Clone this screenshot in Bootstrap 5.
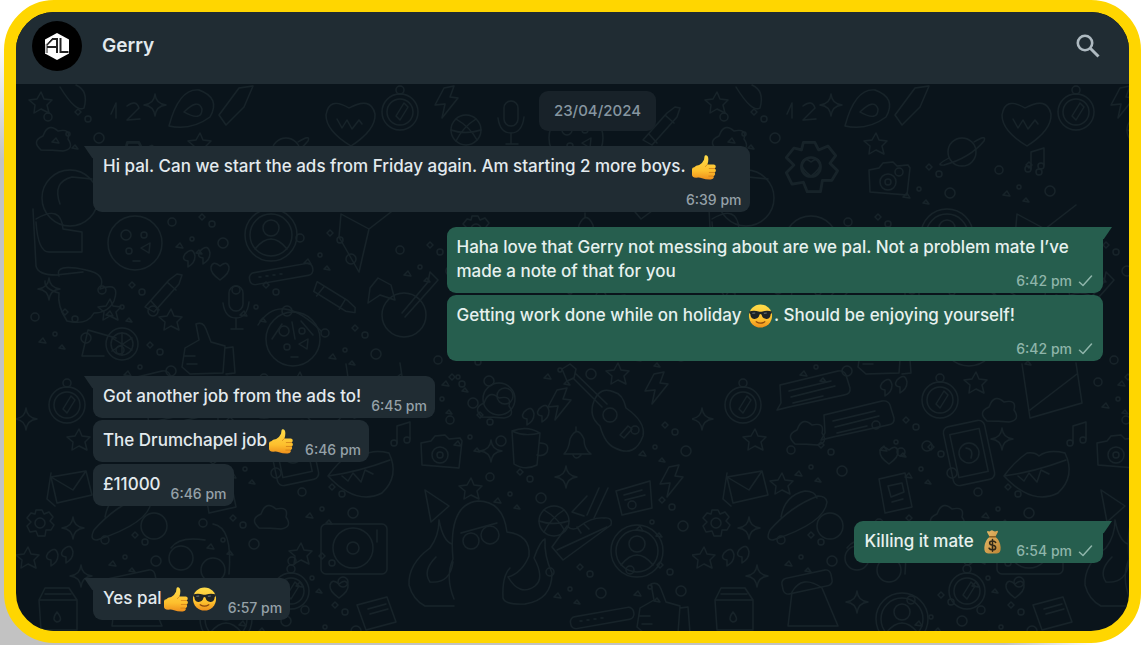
<!DOCTYPE html>
<html lang="en">
<head>
<meta charset="utf-8">
<meta name="viewport" content="width=device-width, initial-scale=1">
<title>Gerry</title>
<link href="https://cdn.jsdelivr.net/npm/bootstrap@5.3.0/dist/css/bootstrap.min.css" rel="stylesheet">
<style>
  body { font-family: Inter, "Liberation Sans", sans-serif; background: linear-gradient(to right, transparent 88%, #fff 96%), linear-gradient(#fff 40px, #c2c2c2 160px); }
  .page { padding: 0 0 2px 4px; }
  .phone { border: 12px solid #ffd600; border-radius: 50px; background: #0a141b; }
  .topbar { background: #202c33; height: 72px; padding: 0 28px 4px 16px; }
  .contact { font-size: 19px; line-height: 24px; font-weight: 600; color: #e2e9ed; }
  .tool { color: #aebac1; line-height: 0; }
  .doodles { stroke: #172329; stroke-width: 1.4; fill: none; stroke-linecap: round; stroke-linejoin: round; }
  .thread { padding: 7px 26px 10px 77px; }
  .group { margin-top: 15px; gap: 2px; }
  .day { background: #182229; color: #8696a0; border-radius: 9px; font-size: 15px; font-weight: 500; line-height: 24px; padding: 8px 15px; margin-right: 1px; }
  .bubble { position: relative; display: flex; align-items: end; gap: 10px; min-height: 42px; padding: 8px 8px 4px 10px; border-radius: 9px; background: #202c33; color: #e3eaee; font-size: 17px; font-weight: 500; line-height: 24px; }
  .bubble p { margin: 0 0 5px; align-self: start; }
  .bubble time { font-size: 14px; line-height: 16px; color: #95a1a8; white-space: nowrap; display: flex; align-items: center; gap: 6px; }
  .bubble.sent { background: #265e4e; color: #e6f1ee; padding-right: 10px; }
  .bubble.sent time { color: #8fb5aa; }
  .bubble.wide { display: grid; width: 65%; min-height: 66px; }
  .bubble.wide > * { grid-area: 1 / 1; }
  .bubble.wide time { align-self: end; justify-self: end; }
  .tail-l { border-top-left-radius: 0; }
  .tail-r { border-top-right-radius: 0; }
  .tail-l::before, .tail-r::after { content: ""; position: absolute; top: 0; width: 10px; height: 13px; background: inherit; }
  .tail-l::before { left: -9px; clip-path: polygon(0 0, 100% 0, 100% 100%, 80% 90%); }
  .tail-r::after { right: -9px; clip-path: polygon(0 0, 100% 0, 20% 90%, 0 100%); }
  .emo { width: 25px; height: 26px; vertical-align: middle; margin: -4px 1px -3px 2px; }
</style>
</head>
<body>
<svg width="0" height="0" class="position-absolute" aria-hidden="true">
  <defs>
    <linearGradient id="gold" x1="0" y1="0" x2="0" y2="1"><stop offset="0" stop-color="#ffdc4a"/><stop offset=".65" stop-color="#fdbf2d"/><stop offset="1" stop-color="#ee8f1c"/></linearGradient>
    <linearGradient id="sack" x1="0" y1="0" x2="1" y2="1"><stop offset="0" stop-color="#e9bd6c"/><stop offset="1" stop-color="#bd8434"/></linearGradient>
    <symbol id="thumb" viewBox="0 0 26 26">
      <path fill="url(#gold)" d="M2 13.5q2-2 5.500-2.500Q11 9 12.500 5.500L13 2q.3-1.500 1.800-1.200Q17 1.200 17 5q0 3-1 5.500h6.500q2.300.2 2.200 2 0 1.500-1.200 2 1.500.7 1.300 2.300-.2 1.500-1.500 1.900 1 .8.700 2.200-.4 1.400-1.700 1.600.6.900.1 2-.7 1.500-3 1.500-5 .2-9-1.200-2.500-1-4-.8-4 .5-5.500-.8-1.600-2-1.500-5 0-3 1.600-4.700z"/>
      <path fill="none" stroke="#cf7c17" stroke-width=".8" stroke-linecap="round" d="M18 14.600h5.500M18 18.700h5M17.500 22.500h4M16 10.500q-1.500 1-2 2"/>
    </symbol>
    <symbol id="cool" viewBox="0 0 26 26">
      <circle cx="13" cy="13" r="12" fill="url(#gold)"/>
      <path fill="#1f2426" d="M1 8.200q6-1.200 10 .2 2 .6 4 0 4-1.400 10-.2l-.5 2-.9.800q-.2 4.800-4 5-4.500.3-5.600-4.500-1-1.200-2 0Q10.900 16.300 6.400 16q-3.800-.2-4-5l-.9-.8z"/>
      <path stroke="#71797c" stroke-width="1" d="M4.500 10.200l3-.3M16.500 10.200l3-.3"/>
      <path fill="none" stroke="#8b480d" stroke-width="1.300" stroke-linecap="round" d="M8.500 19q4.500 3 9 0"/>
    </symbol>
    <symbol id="moneybag" viewBox="0 0 26 26">
      <path fill="url(#sack)" d="M8 1.500q2 1 3-.2 1.500-1 3 .2 1.500 1 4-.2 1 .2.500 1.500L16 7.500q5 4 5.500 11 .3 6.500-4 6.500h-9q-4.300 0-4-6.500Q5 11.500 10 7.500L7.500 3q-.5-1.300.5-1.500z"/>
      <path stroke="#7e541c" stroke-width="1.400" d="M9.500 7.600h7"/>
      <path fill="none" stroke="#302717" stroke-width="1.600" stroke-linecap="round" d="M16.300 13.500q-1-1.500-3.300-1.500-3 0-3 2.100 0 1.900 3 2.300 3.300.4 3.300 2.500 0 2.200-3.300 2.200-2.500 0-3.500-1.600M13 10.500v12"/>
    </symbol>
    <symbol id="tick" viewBox="0 0 15 12"><path fill="none" stroke="currentColor" stroke-width="1.500" stroke-linecap="round" stroke-linejoin="round" d="M1.500 7.200 5 10.500 13.500 1"/></symbol>

    <!-- wallpaper drawings, each centred on its own origin -->
    <g id="star5"><path d="M0-11 3-4l8 1-5 5 2 8-8-4-7 4 1-8-6-5 8-1z"/></g>
    <g id="star4"><path d="M0-11Q1-1 11 0 1 1 0 11-1 1-11 0-1-1 0-11z"/></g>
    <g id="heart"><path d="M0 9Q-10 2-9-4q2-7 9-1 7-6 9 1 1 6-9 13z"/></g>
    <g id="bigheart"><path d="M0 26q-25-15-25-31 3-19 23-7 22-12 26 6Q25 10 0 26zM-14-1l5 9 5-8 5 9 7-9 3 4"/></g>
    <g id="cam"><path d="M-19-12l10-2 4-5 10-1 4 4 11-1 2 3-3 27-37-3z"/><circle r="8"/><circle r="3"/></g>
    <g id="mail"><path d="M-20-12l35-6 6 24-35 8zM-20-12 2 1l13-19M-20-16l-4 26 8 7"/></g>
    <g id="chat"><path d="M-32-6l58-14q6-1 8 4l4 13q1 6-6 7l-55 12-12 3 4-7zM-23 0l42-10M-21 6l44-11M-19 12l30-7"/></g>
    <g id="person"><circle r="26"/><circle r="21"/><circle cy="-7" r="8"/><path d="M-16 14Q0-6 16 14"/></g>
    <g id="clock"><circle r="18"/><circle r="13"/><circle cy="-22" r="4"/><path d="M4-9-4 4l4 4L8-5z"/></g>
    <g id="pencil"><path d="M-18 14l24-27 8-6 5 1-3 9-25 28zM4-11l9 8M-12 8l8 9"/></g>
    <g id="cloud"><path d="M-14 10q-10-9 2-14 5-14 15-5 13-3 10 8 7 10-5 12-10-1-22-1z"/></g>
    <g id="mug"><path d="M-14-18q15-6 28 2l-3 32q-12 6-23-1zM-14-18q12 6 28 2M14-6q10 0 7 9-4 5-10 3"/></g>
    <g id="bell"><path d="M-13 9q5-5 6-15 7-15 14 0 0 10 7 15zM-4 10q3 6 8 0M-1-14v-4"/></g>
    <g id="guitar"><path d="M-48-46l8-5 6 5-2 9-7 3zM-37-37-8-8M-34-41-3-11M-16-14q6-15 20-9 9 2 12 16 20 14 17 28-8 22-28 12-10-4-15-22-12-10-6-25z"/><circle r="7"/><path d="M10 20l8-9 4 3-8 9z"/></g>
    <g id="planet"><circle r="14"/><path d="M-13 6Q-28 14-18 13 8 6 22-11 25-18 12-10"/></g>
    <g id="mic"><rect x="-7" y="-20" width="14" height="25" rx="7"/><path d="M-13-3q2 15 13 15T13-4M0 12v11M-5 23H7"/></g>
    <g id="bolt"><path d="M-2-14l10-2-4 11 8 1-16 20 3-14-10 1z"/></g>
    <g id="hand"><path d="M-18-1l14-8-3-16q7-3 10 5l5 13 14 4-2 27-33 1-8-7zM-18 7h10M-16 15H-6M22-1l8-1 2 26-9 1"/></g>
    <g id="tablet"><rect x="-21" y="-30" width="42" height="60" rx="6" transform="rotate(-12)"/><rect x="-15" y="-22" width="30" height="44" transform="rotate(-12)"/><circle r="10"/><path d="M-3-5q8 1 5 10"/></g>
    <g id="lips"><path d="M-34 6q10-14 23-23 8-1 12 3 9-7 26-3 11 23-7 40-26 13-54-17zM-34 6q30-4 62-16M-20 6l6 5 5-8 8 9 4-12 8 4"/></g>
    <g id="shoe"><path d="M-30 12-15-9q6 6 13 0 12-9 24-8 9-1 7 7L-19 25zM-25 15 25-8M-5-8l4 6M2-11l5 5"/></g>
    <g id="ball"><circle r="15"/><path d="M-10-11Q4-3 11 10M10-11Q-3-3-10 11M-15 0q14 5 30 0"/></g>
    <g id="gear"><path d="M-4-13h6l2 4 5-2 4 5-3 4 4 4-3 5-5 0-1 6-7 0-2-5-6 1-3-6 4-4-4-4 4-5 4 1z"/><circle r="5"/></g>
    <g id="note"><path d="M-5 9V-8L8-12V5"/><circle cx="-8" cy="9" r="3"/><circle cx="5" cy="6" r="3"/></g>
    <g id="quote"><path d="M-12-5q8-8 10 2 0 7-7 11l0-6q-7-1-3-7zM3-8q8-8 10 2 0 7-7 11l0-6q-7-1-3-7z"/></g>
    <g id="cookie"><circle r="27"/><circle cx="-9" cy="-8" r="5"/><circle cx="9" cy="-8" r="3"/><circle cx="-6" cy="8" r="3"/><path d="M6 5l9-5-1 10zM-2 18h7"/></g>
    <g id="octopus"><path d="M-25 55q-9-22-1-40-5-55 25-58 25 0 29 31 24 3 22 24-7 17-21 21 12 20 27 9 10-8-1-28 6-17 11-19-1 17 7 34 0 27-27 31-20 1-22-6-1-22 7-30M-27 0q-9-3-13-24 0 16-9 28-22 16-21 37 4 15 16 21l29 0M-43 13q-14 14-6 25 20 2 23-20"/><circle cx="-8" cy="-3" r="8"/><circle cx="11" cy="-9" r="9"/><path d="M-18-11l36-10"/></g>
    <g id="radio"><rect x="-32" y="-24" width="66" height="50" rx="5"/><circle r="20"/><circle r="6"/><path d="M24-18v12"/></g>
    <g id="carton"><path d="M-16 22l-2-30 6-12h24l8 12 0 30zM-18-8H20M-12-14H14"/><path d="M0 4q7 9 0 10-6-2 0-10z"/></g>
    <g id="ufo"><path d="M-35 12Q-14-12 13-22q8 0 9 6Q20 5-32 22q-8 0-3-10zM-24-1Q-20-23 0-27q10 0 12 7"/><circle cx="25" cy="8" r="13"/></g>
    <g id="tube"><rect x="-32" y="-5" width="64" height="12" rx="5" transform="rotate(-10)"/><path d="M-22 4h2m5-1h2m5-1h2m5-1h2"/></g>
    <g id="cheese"><path d="M-28 16l6-26 28 8M-28 16l22 0"/><circle cx="12" cy="4" r="16"/><circle cx="12" cy="4" r="11"/><path d="M2-2l20 12M12-7v22M2 11l20-13"/></g>
    <g id="dots"><circle cx="-26" cy="-9" r="4"/><circle cx="-6" cy="8" r="2"/><circle cx="14" cy="-7" r="3"/><circle cx="25" cy="12" r="5"/><path d="M-22 16l4-4 3 5zM4-17l3 3-3 3-3-3zM-2 22l3-3 3 4z"/></g>

    <pattern id="wall" class="doodles" width="676" height="560" patternUnits="userSpaceOnUse">
      <use href="#star5" x="25" y="19"/><path d="M44 3q16 26 24 21 5-17-8-23M95 30l5-11v15M111 22q9-7 12 2l-12 12 13-1"/><use href="#star4" x="139" y="21"/>
      <path d="M153 42q10-38 30-36 22 8 11 27-19 14-41 9zM168 28q14-14 18-3 0 13-18 3"/><path d="M203 31l20-27 14-2-9 21-18 18z"/><use href="#planet" x="270" y="68"/>
      <use href="#bigheart" x="335" y="36"/><use href="#clock" x="384" y="28"/><use href="#cam" x="196" y="98"/><use href="#cloud" x="39" y="56"/><use href="#star5" x="184" y="60"/>
      <g transform="translate(119 83)"><use href="#gear" transform="scale(1.900)"/><use href="#heart"/></g>
      <use href="#bolt" x="430" y="18"/><use href="#ball" x="450" y="46"/><use href="#star5" x="612" y="22"/><use href="#cookie" x="560" y="54"/><use href="#mic" x="495" y="37"/>
      <use href="#pencil" x="645" y="42"/><use href="#heart" x="520" y="87"/><use href="#note" x="344" y="76"/>
      <circle cx="54" cy="114" r="28"/><path d="M44 120q-8-22 12-27l20 2M17 125l3 57q2 9 20 9l27-3M20 135q25-15 27 10l19 3v20h-33q-11 0-13-30M43 192q-5-13 27-6 21 4 14 19 21-8 14 12-6 12-20 12-7 13-27 8-10-15-8-28-15-4-14-12"/>
      <use href="#cookie" x="119" y="159"/><use href="#person" x="255" y="151"/><use href="#tube" x="265" y="189"/><use href="#pencil" x="147" y="209"/><use href="#mic" x="220" y="222"/><use href="#heart" x="204" y="187"/><use href="#quote" x="181" y="175"/>
      <use href="#star4" x="33" y="205"/><use href="#star5" x="94" y="226"/><use href="#star5" x="155" y="236"/><use href="#cheese" x="94" y="256"/><use href="#hand" x="187" y="265"/><use href="#cookie" x="277" y="255"/><path d="M242 241q22-35 63 6M266 240l-10 15M276 238l3 17M285 237l12 14"/>
      <path d="M325 130l28 15-10 43-20-35zM353 145l31-24M362 194l13 7 4 15-15-5-12 8 2-15z"/><use href="#pencil" transform="translate(318 213) rotate(80)"/>
      <circle cx="388" cy="231" r="22"/><path d="M386 229l26-31 2-10 8 8-7 8-26 29"/><use href="#gear" x="460" y="145"/><use href="#planet" x="508" y="167"/><use href="#bell" x="570" y="147"/><use href="#note" x="619" y="182"/><use href="#cam" x="510" y="247"/><use href="#star4" x="641" y="157"/><use href="#mail" x="594" y="229"/><use href="#shoe" x="644" y="110"/>
      <use href="#clock" x="51" y="321"/><use href="#star4" x="10" y="335"/><use href="#star5" x="63" y="356"/><use href="#chat" x="120" y="307"/><use href="#chat" x="164" y="337"/><use href="#cloud" x="117" y="350"/><use href="#clock" x="248" y="316"/><use href="#quote" x="202" y="304"/><use href="#star5" x="284" y="299"/><use href="#cloud" x="309" y="327"/>
      <path d="M330 280l8 54 52-15-6-40M338 326l47-36"/><use href="#cloud" x="480" y="323"/><circle cx="483" cy="315" r="16"/><circle cx="489" cy="312" r="8"/><use href="#quote" x="520" y="333"/><use href="#bolt" x="543" y="320"/><use href="#guitar" x="594" y="331"/><use href="#star5" x="602" y="290"/><use href="#bolt" x="640" y="304"/>
      <use href="#cam" x="424" y="371"/><use href="#mug" x="510" y="365"/><use href="#bell" x="561" y="361"/><use href="#star4" x="475" y="367"/><use href="#star4" x="550" y="393"/><use href="#tablet" x="277" y="369"/><use href="#star4" x="310" y="355"/><use href="#lips" x="346" y="386"/><use href="#heart" x="197" y="371"/><use href="#note" x="386" y="350"/>
      <use href="#mail" x="55" y="405"/><use href="#gear" x="24" y="439"/><use href="#star4" x="57" y="444"/><use href="#ufo" x="113" y="434"/><use href="#star5" x="90" y="400"/><use href="#cloud" x="257" y="434"/><use href="#radio" x="337" y="464"/><path d="M187 395l26-6 7 34-27 6zM196 402l14-3 2 9-13 5zM200 418l11-3"/>
      <path d="M409 406l24 16-18 16z"/><use href="#star5" x="455" y="405"/><use href="#ball" x="538" y="437"/><use href="#octopus" x="463" y="460"/><path d="M571 412l-15 16 12 4M583 404l-12 27M592 404l-14 30"/><path d="M600 407l34-10 2 27-30 7zM608 411l18-5M609 416l20-5"/><use href="#bolt" x="655" y="397"/><use href="#shoe" x="566" y="451"/><use href="#person" x="621" y="467"/><use href="#tube" x="586" y="533"/>
      <use href="#star5" x="12" y="474"/><use href="#quote" x="44" y="474"/><use href="#star4" x="65" y="492"/><use href="#carton" x="41" y="524"/><circle cx="165" cy="474" r="12"/><circle cx="197" cy="486" r="12"/><path d="M155 464q8-12 34-8M197 440q20 3 16 50"/><rect x="90" y="490" width="50" height="16" rx="5" transform="rotate(-12 115 498)"/><path d="M100 508q10-18 30-4l16 38h-50z"/><use href="#star4" x="165" y="518"/><use href="#person" x="210" y="535"/><use href="#star5" x="285" y="470"/><use href="#heart" x="323" y="505"/><path d="M341 521l30-8 9 25-30 8zM352 525l18-5M354 530l18-5"/><use href="#clock" x="275" y="507"/><use href="#hand" x="642" y="525"/>
      <use href="#dots" x="58" y="42"/><use href="#dots" x="233" y="97"/><use href="#dots" x="333" y="95"/><use href="#dots" x="475" y="92"/><use href="#dots" x="595" y="85"/><use href="#dots" x="182" y="147"/><use href="#dots" x="310" y="163"/><use href="#dots" x="410" y="175"/><use href="#dots" x="560" y="200"/><use href="#dots" x="112" y="215"/><use href="#dots" x="246" y="215"/><use href="#dots" x="45" y="242"/><use href="#dots" x="130" y="275"/><use href="#dots" x="335" y="258"/><use href="#dots" x="448" y="285"/><use href="#dots" x="550" y="278"/><use href="#dots" x="640" y="260"/><use href="#dots" x="210" y="350"/><use href="#dots" x="432" y="307"/><use href="#dots" x="460" y="345"/><use href="#dots" x="645" y="355"/><use href="#dots" x="125" y="375"/><use href="#dots" x="235" y="377"/><use href="#dots" x="312" y="417"/><use href="#dots" x="500" y="402"/><use href="#dots" x="642" y="430"/><use href="#dots" x="213" y="448"/><use href="#dots" x="115" y="465"/><use href="#dots" x="302" y="486"/><use href="#dots" x="560" y="497"/><use href="#dots" x="640" y="495"/><use href="#dots" x="245" y="525"/><use href="#dots" x="315" y="535"/>
    </pattern>
  </defs>
</svg>

<div class="page min-vh-100 d-flex">
  <main class="phone flex-grow-1 d-flex flex-column overflow-hidden">
    <header class="topbar d-flex align-items-center">
      <svg width="50" height="50" viewBox="0 0 50 50" role="img" aria-label="AL logo">
        <circle cx="25" cy="25" r="25" fill="#000"/>
        <path fill="#fff" d="M25 12l12 6.500v14L25 39l-12-6.500v-14z"/>
        <path fill="none" stroke="#222" stroke-width="2" d="M14.500 32V24l6-6h4.500v14M15 26h10M28.500 17v14h8"/>
        <path fill="none" stroke="#fff" stroke-width="1" d="M14 33v-9.500l6-7"/>
      </svg>
      <h1 class="contact mb-0 ms-3 ps-1 flex-grow-1">Gerry</h1>
      <button type="button" class="tool btn border-0 p-0" aria-label="Search">
        <svg width="26" height="26" viewBox="0 0 26 26" fill="none" stroke="currentColor"><circle cx="10" cy="10" r="7.200" stroke-width="2.600"/><path stroke-width="3" d="M15.500 15.500l8 8"/></svg>
      </button>
    </header>

    <section class="position-relative flex-grow-1">
      <svg class="position-absolute top-0 start-0 w-100 h-100" aria-hidden="true"><rect width="100%" height="100%" fill="url(#wall)"/></svg>
      <div class="thread position-relative d-flex flex-column">
        <div class="day align-self-center">23/04/2024</div>

        <div class="group d-flex flex-column align-items-start">
          <div class="bubble wide tail-l"><p>Hi pal. Can we start the ads from Friday again. Am starting 2 more boys. <svg class="emo" role="img" aria-label="thumbs up"><use href="#thumb"/></svg></p><time>6:39 pm</time></div>
        </div>

        <div class="group d-flex flex-column align-items-end">
          <div class="bubble sent wide tail-r"><p>Haha love that Gerry not messing about are we pal. Not a problem mate I’ve made a note of that for you</p><time>6:42 pm <svg width="15" height="12"><use href="#tick"/></svg></time></div>
          <div class="bubble sent wide"><p>Getting work done while on holiday <svg class="emo" role="img" aria-label="cool face"><use href="#cool"/></svg>. Should be enjoying yourself!</p><time>6:42 pm <svg width="15" height="12"><use href="#tick"/></svg></time></div>
        </div>

        <div class="group d-flex flex-column align-items-start">
          <div class="bubble tail-l"><p>Got another job from the ads to!</p><time>6:45 pm</time></div>
          <div class="bubble"><p>The Drumchapel job<svg class="emo" role="img" aria-label="thumbs up"><use href="#thumb"/></svg></p><time>6:46 pm</time></div>
          <div class="bubble"><p>£11000</p><time>6:46 pm</time></div>
        </div>

        <div class="group d-flex flex-column align-items-end">
          <div class="bubble sent tail-r"><p>Killing it mate <svg class="emo" role="img" aria-label="money bag"><use href="#moneybag"/></svg></p><time>6:54 pm <svg width="15" height="12"><use href="#tick"/></svg></time></div>
        </div>

        <div class="group d-flex flex-column align-items-start">
          <div class="bubble tail-l"><p>Yes pal<svg class="emo" role="img" aria-label="thumbs up"><use href="#thumb"/></svg><svg class="emo" role="img" aria-label="cool face"><use href="#cool"/></svg></p><time>6:57 pm</time></div>
        </div>
      </div>
    </section>
  </main>
</div>
<script src="https://cdn.jsdelivr.net/npm/bootstrap@5.3.0/dist/js/bootstrap.bundle.min.js"></script>
</body>
</html>
